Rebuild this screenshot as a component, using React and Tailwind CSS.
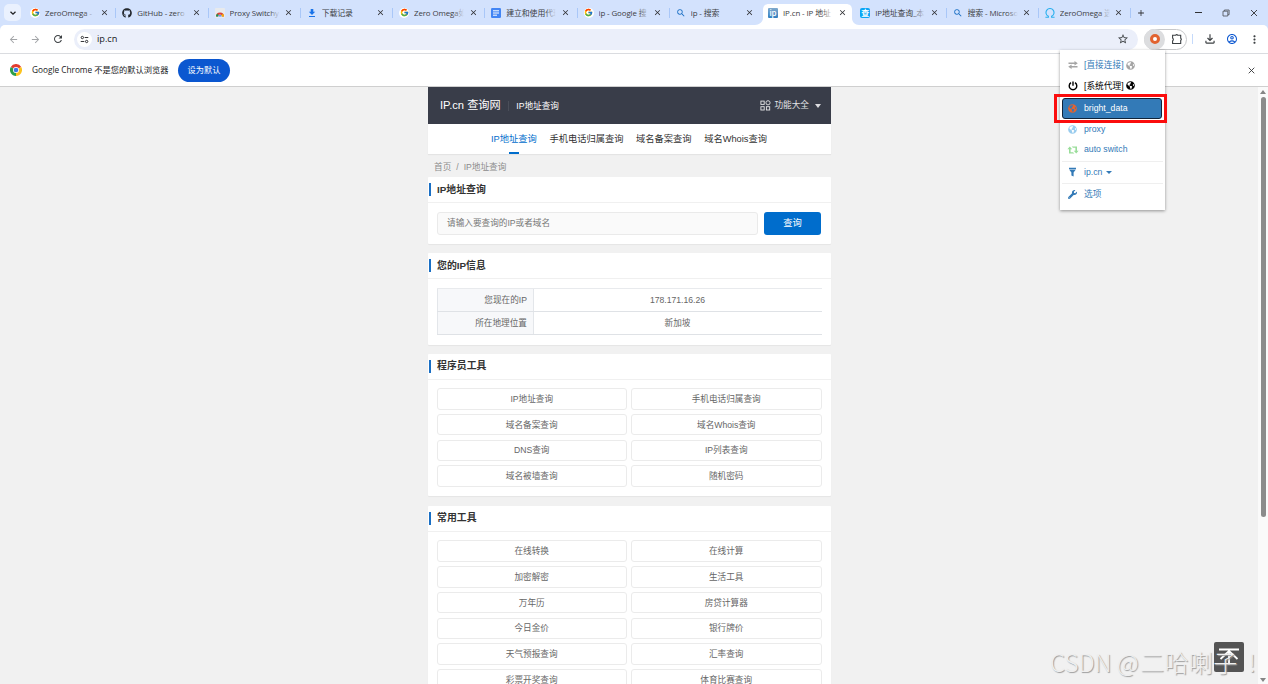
import { FaGithub, FaGlobeAmericas, FaWrench } from "react-icons/fa";
import { FcGoogle } from "react-icons/fc";
import {
  MdAdd,
  MdArrowBack,
  MdArrowForward,
  MdClose,
  MdMoreVert,
  MdOutlineAccountCircle,
  MdOutlineFileDownload,
  MdRefresh,
  MdSearch,
  MdStarBorder,
} from "react-icons/md";

const TABS = [
  { icon: "google", title: "ZeroOmega -" },
  { icon: "github", title: "GitHub - zero" },
  { icon: "store", title: "Proxy Switchy" },
  { icon: "download", title: "下载记录" },
  { icon: "google", title: "Zero Omega如" },
  { icon: "docs", title: "建立和使用代理" },
  { icon: "google", title: "ip - Google 搜" },
  { icon: "search", title: "ip - 搜索" },
  { icon: "ip", title: "IP.cn - IP 地址", active: true },
  { icon: "cha", title: "IP地址查询_本" },
  { icon: "search", title: "搜索 - Microso" },
  { icon: "omega", title: "ZeroOmega 选" },
];

const NAV = ["IP地址查询", "手机电话归属查询", "域名备案查询", "域名Whois查询"];

const DEV_TOOLS = [
  "IP地址查询",
  "手机电话归属查询",
  "域名备案查询",
  "域名Whois查询",
  "DNS查询",
  "IP列表查询",
  "域名被墙查询",
  "随机密码",
];

const COMMON_TOOLS = [
  "在线转换",
  "在线计算",
  "加密解密",
  "生活工具",
  "万年历",
  "房贷计算器",
  "今日金价",
  "银行牌价",
  "天气预报查询",
  "汇率查询",
  "彩票开奖查询",
  "体育比赛查询",
];

function ChromeLogo({ className }) {
  return (
    <svg viewBox="0 0 24 24" className={className}>
      <path d="M12 12 1.6 6A12 12 0 0 1 22.4 6Z" fill="#e33b2e" />
      <path d="M12 12V24A12 12 0 0 1 1.6 6Z" fill="#2a9d4a" />
      <path d="M12 12 22.4 6A12 12 0 0 1 12 24Z" fill="#fcc31e" />
      <circle cx="12" cy="12" r="6" fill="#fff" />
      <circle cx="12" cy="12" r="4.6" fill="#3b78e7" />
    </svg>
  );
}

function TabIcon({ name }) {
  switch (name) {
    case "google":
      return (
        <span className="flex size-[10px] items-center justify-center rounded-full bg-white">
          <FcGoogle className="size-[9px]" />
        </span>
      );
    case "github":
      return <FaGithub className="size-[10px] text-[#24292f]" />;
    case "store":
      return (
        <svg viewBox="0 0 10 10" className="size-[10px]">
          <rect width="10" height="10" rx="1" fill="#e8eaed" />
          <path d="M1 8.5a4 4 0 0 1 8 0H7a2 2 0 0 0-4 0Z" fill="#db4437" />
          <path d="M1 8.5A4 4 0 0 1 2.2 5.7L3.6 7.2 3 8.5Z" fill="#0f9d58" />
          <path d="M9 8.5A4 4 0 0 0 7.8 5.7L6.4 7.2 7 8.5Z" fill="#f4b400" />
          <path d="M3.4 8.5a1.6 1.6 0 0 1 3.2 0Z" fill="#4285f4" />
        </svg>
      );
    case "download":
      return (
        <svg viewBox="0 0 10 10" className="size-[10px]" fill="#1a73e8">
          <path d="M3.7 1h2.6v2.8h1.9L5 7 1.8 3.8h1.9ZM2 8h6v1.1H2Z" />
        </svg>
      );
    case "docs":
      return (
        <svg viewBox="0 0 10 10" className="size-[10px]">
          <rect width="10" height="10" rx="1.2" fill="#4285f4" />
          <path d="M2 2.8h6M2 5h6M2 7.2h4" stroke="#fff" strokeWidth="1" />
        </svg>
      );
    case "search":
      return <MdSearch className="size-[10px] text-[#1a6fc4]" />;
    case "ip":
      return (
        <span className="flex size-[10px] items-center justify-center rounded-[1px] bg-linear-to-b from-[#7fa9cc] to-[#2f7fc0] text-[8px] leading-none font-semibold text-white">
          ip
        </span>
      );
    case "cha":
      return (
        <span className="flex size-[10px] items-center justify-center rounded-[2px] bg-[#0aa5f5] text-[8px] leading-none font-bold text-white">
          查
        </span>
      );
    default:
      return (
        <svg viewBox="0 0 10 10" className="size-[10px]" fill="none" stroke="#2bb0ee" strokeWidth="1.1">
          <path d="M.4 9.3h3V8.2A4 4 0 1 1 6.6 8.2v1.1h3" />
        </svg>
      );
  }
}

function Tab({ tab, last }) {
  const fade = tab.active ? "to-white" : "to-[#d3e2fd]";
  return (
    <div className="relative flex h-full w-[92.25px] shrink-0 items-center pl-[6px]">
      {tab.active && (
        <svg viewBox="0 0 104 21" className="absolute -left-[7px] bottom-0 h-[21px] w-[104px]" fill="#fff">
          <path d="M0 21c4 0 8-3 8-7V6c0-4 2-6 6-6h77c4 0 6 2 6 6v8c0 4 3 7 7 7Z" />
        </svg>
      )}
      <div className="relative flex items-center">
        <TabIcon name={tab.icon} />
        <div className="relative ml-[5px] w-[50px] overflow-hidden text-[7.9px] leading-[12px] tracking-[-0.1px] whitespace-nowrap text-[#3c4043]">
          {tab.title}
          <span className={`absolute inset-y-0 right-0 w-[11px] bg-linear-to-r from-transparent ${fade}`} />
        </div>
        <MdClose className="ml-[4.5px] size-[9px] text-[#303134]" />
      </div>
      {!tab.active && !last && <span className="absolute right-0 h-[10px] w-px bg-[#a9c7f8]" />}
    </div>
  );
}

function TabStrip() {
  return (
    <div className="flex h-[25px] items-center bg-[#d3e2fd]">
      <div className="ml-[4px] flex size-[17px] items-center justify-center rounded-[5px] bg-[#eaf1fe]">
        <svg viewBox="0 0 8 8" className="size-[8px]" fill="none" stroke="#202124" strokeWidth="1.3">
          <path d="m1.5 2.8 2.5 2.4 2.5-2.4" />
        </svg>
      </div>
      <div className="ml-[3px] flex h-full">
        {TABS.map((tab, i) => (
          <Tab key={i} tab={tab} last={TABS[i + 1]?.active} />
        ))}
      </div>
      <MdAdd className="ml-[5px] size-[10px] text-[#303134]" />
      <div className="ml-auto flex items-center gap-[20px] pr-[10px]">
        <span className="h-px w-[7px] bg-[#303134]" />
        <svg viewBox="0 0 8 8" className="size-[8px]" fill="none" stroke="#4a4d52" strokeWidth=".8">
          <path d="M1 2.2h4.8V7H1ZM2.4 2V1h4.7v4.7H6" />
        </svg>
        <svg viewBox="0 0 8 8" className="size-[8px]" stroke="#303134" strokeWidth=".9">
          <path d="m1 1 6 6M7 1 1 7" />
        </svg>
      </div>
    </div>
  );
}

function Toolbar() {
  return (
    <div className="bg-[#d3e2fd]">
      <div className="flex h-[29px] items-center rounded-t-[5px] border-b border-[#dadce0] bg-white text-[#3c4043]">
        <MdArrowBack className="ml-[8px] size-[11px] text-[#a3a5a8]" />
        <MdArrowForward className="ml-[11px] size-[11px] text-[#a3a5a8]" />
        <MdRefresh className="ml-[11px] size-[12px]" />
        <div className="ml-[10px] flex h-[21px] w-[1064px] items-center rounded-full bg-[#ebeffa] pr-[9px] pl-[3px]">
          <span className="flex size-[15px] items-center justify-center rounded-full bg-white">
            <svg viewBox="0 0 10 10" className="size-[9px]" fill="none" stroke="#303134" strokeWidth="1.1">
              <circle cx="2.6" cy="2.8" r="1.3" />
              <path d="M5.2 2.8h4M.8 7.2h4" />
              <circle cx="7.4" cy="7.2" r="1.3" />
            </svg>
          </span>
          <span className="ml-[5px] text-[9.2px] leading-[14px] text-[#202124]">ip.cn</span>
          <MdStarBorder className="ml-auto size-[12px]" />
        </div>
        <div className="ml-[6px] flex h-[21px] w-[43px] items-center rounded-full border border-[#c7c8ca]">
          <span className="-ml-px flex size-[21px] items-center justify-center rounded-full bg-[#dcdddf]">
            <span className="size-[10px] rounded-full border-[3px] border-[#e2632f] bg-white" />
          </span>
          <svg viewBox="0 0 12 12" className="ml-[6px] size-[12px]" fill="none" stroke="#3c4043" strokeWidth="1.1">
            <path d="M1.6 2.3h2.9q1.2-1.3 2.4 0h2.8v3q1.3 1 0 2.2v3H1.6V7.8q1.5-1.4 0-2.8Z" />
          </svg>
        </div>
        <span className="ml-[5px] h-[10px] w-px bg-[#c5dafb]" />
        <MdOutlineFileDownload className="ml-[10px] size-[14px]" />
        <MdOutlineAccountCircle className="ml-[8.5px] size-[12px] text-[#0b57d0]" />
        <MdMoreVert className="ml-[10px] size-[13px]" />
      </div>
    </div>
  );
}

function InfoBar() {
  return (
    <div className="flex h-[33px] items-center border-b border-[#cfcfcf] bg-white">
      <ChromeLogo className="ml-[10px] size-[12px]" />
      <span className="ml-[10px] w-[146px] text-[8.25px] whitespace-nowrap text-[#202124]">
        Google Chrome 不是您的默认浏览器
      </span>
      <button className="h-[23px] w-[52px] rounded-full bg-[#0b57d0] text-[8.2px] text-white">
        设为默认
      </button>
      <svg viewBox="0 0 8 8" className="mr-[13px] ml-auto size-[7px]" stroke="#303134" strokeWidth="1">
        <path d="m.8.8 6.4 6.4M7.2.8.8 7.2" />
      </svg>
    </div>
  );
}

function Card({ title, className = "", children }) {
  return (
    <section className={`rounded-[1px] bg-white shadow-[0_1px_1px_rgba(0,0,0,0.05)] ${className}`}>
      <div className="flex h-[26px] items-center border-b border-[#f0f0f0] pl-px">
        <span className="h-[13px] w-[2px] bg-[#1a6fc4]" />
        <h2 className="ml-[6.5px] text-[9.9px] leading-[14px] font-bold text-[#333]">{title}</h2>
      </div>
      {children}
    </section>
  );
}

function ToolGrid({ items }) {
  return (
    <div className="grid grid-cols-2 gap-x-[4px] gap-y-[4.3px] px-[9px] pt-[8.5px] pb-[9px]">
      {items.map((item) => (
        <a
          key={item}
          className="flex h-[21.5px] items-center justify-center rounded-[3px] border border-[#ebebeb] pt-px text-[8.65px] text-[#666]"
        >
          {item}
        </a>
      ))}
    </div>
  );
}

function IpRow({ label, value }) {
  return (
    <div className="flex h-[23.2px] border-b border-[#dfe2e6]">
      <div className="flex w-[97px] items-center justify-end border-x border-[#e3e6ea] bg-[#f7f8fa] pr-[5.5px]">
        {label}
      </div>
      <div className="flex flex-1 items-center justify-center">{value}</div>
    </div>
  );
}

function Site() {
  return (
    <main className="mx-auto w-[403px] font-['Liberation_Sans','Noto_Sans_CJK_SC',sans-serif]">
      <header className="flex h-[37px] items-center bg-[#393d49] pr-[9.5px] pl-[12.5px] text-white">
        <span className="text-[11.2px]">IP.cn 查询网</span>
        <span className="ml-[7.5px] h-[10px] w-px bg-[#4a4e59]" />
        <span className="ml-[7px] pt-px text-[8.65px]">IP地址查询</span>
        <svg viewBox="0 0 11 11" className="ml-auto size-[11px]" fill="none" stroke="#e8e8e8" strokeWidth=".9">
          <rect x=".9" y="1.1" width="3.3" height="3.3" />
          <circle cx="8" cy="2.8" r="2.1" />
          <rect x=".9" y="6.7" width="3.3" height="3.3" />
          <rect x="6.4" y="6.7" width="3.3" height="3.3" />
        </svg>
        <span className="ml-[3px] text-[8.65px] text-[#e4e4e6]">功能大全</span>
        <span className="ml-[6px] border-x-[3.5px] border-t-[4px] border-x-transparent border-t-[#dddde0]" />
      </header>

      <nav className="flex h-[30px] justify-center gap-[12.5px] bg-white text-[9.28px] text-[#333] shadow-[0_1px_1px_rgba(0,0,0,0.05)]">
        {NAV.map((item, i) => (
          <a
            key={item}
            className={i === 0 ? "flex flex-col items-center text-[#006dcc]" : "flex flex-col items-center"}
          >
            <span className="flex flex-1 items-center pt-[3px]">{item}</span>
            <span className={i === 0 ? "h-[2px] w-[10px] bg-[#006dcc]" : "h-[2px]"} />
          </a>
        ))}
      </nav>

      <div className="flex h-[23px] items-center gap-[5px] pt-[3px] pl-[6.5px] text-[8.65px] text-[#8c8c8c]">
        <span>首页</span>
        <span>/</span>
        <span>IP地址查询</span>
      </div>

      <Card title="IP地址查询" className="h-[67px]">
        <div className="flex gap-[6px] px-[9.5px] pt-[9px]">
          <div className="flex h-[23px] flex-1 items-center rounded-[3px] border border-[#eaeaea] bg-[#fafafa] pl-[9px] text-[8.65px] text-[#777]">
            请输入要查询的IP或者域名
          </div>
          <button className="h-[22.5px] w-[57px] rounded-[3px] bg-[#006dcc] pt-[2px] text-[9.3px] text-white">
            查询
          </button>
        </div>
      </Card>

      <Card title="您的IP信息" className="mt-[9px] h-[92px]">
        <div className="mx-[9px] mt-[9px] border-t border-[#e8eaed] text-[8.65px] text-[#666]">
          <IpRow label="您现在的IP" value="178.171.16.26" />
          <IpRow label="所在地理位置" value="新加坡" />
        </div>
      </Card>

      <Card title="程序员工具" className="mt-[8.5px] h-[142.5px]">
        <ToolGrid items={DEV_TOOLS} />
      </Card>

      <Card title="常用工具" className="mt-[9.8px]">
        <ToolGrid items={COMMON_TOOLS} />
      </Card>
    </main>
  );
}

function Scrollbar() {
  return (
    <div className="flex w-[10px] flex-col items-center bg-[#fafafa] pt-[3px] pb-[2px]">
      <span className="border-x-[3px] border-b-[4px] border-x-transparent border-b-[#858585]" />
      <span className="mt-[3px] h-[420px] w-[5px] rounded-full bg-[#8b8b8b]" />
      <span className="mt-auto border-x-[3px] border-t-[4px] border-x-transparent border-t-[#858585]" />
    </div>
  );
}

/* Extension popup, hangs below the toolbar button */
function ProxyMenu() {
  return (
    <div className="absolute top-[50px] left-[1060px] h-[160px] w-[105px] bg-white px-[2px] pt-[5px] font-['Liberation_Sans','Noto_Sans_CJK_SC',sans-serif] text-[8.7px] text-[#337ab7] shadow-[0_1px_3px_rgba(0,0,0,0.4)]">
      <div className="flex h-[20.5px] items-center pl-[6px]">
        <svg viewBox="0 0 10 8" className="mb-px h-[8px] w-[10px]" fill="#a5a5a5">
          <path d="M.5 1.5h6V0L9.8 2.3 6.5 4.5V3.1h-6ZM9.5 4.9H3.6V3.5L.2 5.7l3.4 2.3V6.5h5.9Z" />
        </svg>
        <span className="ml-[6px] pt-px">[直接连接]</span>
        <FaGlobeAmericas className="ml-[2px] size-[9px] text-[#a5a5a5]" />
      </div>
      <div className="flex h-[20.5px] items-center pl-[6px] text-black">
        <svg viewBox="0 0 10 10" className="size-[10px]" fill="none" stroke="#000" strokeWidth="1.4">
          <path d="M3 1.7a3.8 3.8 0 1 0 4 0M5 .6v4.2" />
        </svg>
        <span className="ml-[6px] pt-px">[系统代理]</span>
        <FaGlobeAmericas className="ml-[2px] size-[9px]" />
      </div>
      <div className="mt-[2px] mr-px flex h-[21px] items-center rounded-[3px] border border-[#10243a] bg-[#337ab7] pl-[5px] text-white">
        <FaGlobeAmericas className="size-[9px] text-[#e2632f]" />
        <span className="ml-[7px]">bright_data</span>
      </div>
      <div className="flex h-[20.5px] items-center pl-[6px]">
        <FaGlobeAmericas className="size-[9px] text-[#99ccee]" />
        <span className="ml-[7px]">proxy</span>
      </div>
      <div className="flex h-[20.5px] items-center pl-[5px]">
        <svg viewBox="0 0 12 8" className="h-[8px] w-[12px]" fill="#99dd99">
          <path d="M2.8.4 5.2 3.2H3.6v3H6l1.3 1.4H2V3.2H.4ZM9.2 7.6 6.8 4.8h1.6v-3H6L4.7.4H10v4.4h1.6Z" />
        </svg>
        <span className="ml-[5px]">auto switch</span>
      </div>
      <div className="mt-px flex h-[23px] items-center border-y border-[#efefef] pl-[6px]">
        <svg viewBox="0 0 9 10" className="mb-[2px] h-[10px] w-[9px]" fill="#337ab7">
          <path d="M1 .8h7v1.4H1ZM1.3 2.8h6.4L5.6 5.6v3.8l-2.2-.9V5.6Z" />
        </svg>
        <span className="ml-[7px] pt-px">ip.cn</span>
        <span className="ml-[4px] border-x-[3px] border-t-[3px] border-x-transparent border-t-[#337ab7]" />
      </div>
      <div className="flex h-[21px] items-center pl-[6px]">
        <FaWrench className="mb-px size-[9px]" />
        <span className="ml-[7px] pt-px">选项</span>
      </div>
    </div>
  );
}

export default function App() {
  return (
    <div className="relative flex h-[684px] w-[1268px] flex-col overflow-hidden bg-[#f1f1f1] font-['Open_Sans','Noto_Sans_CJK_SC',sans-serif]">
      <TabStrip />
      <Toolbar />
      <InfoBar />
      <div className="flex min-h-0 flex-1">
        <div className="min-w-0 flex-1 overflow-hidden">
          <Site />
        </div>
        <Scrollbar />
      </div>

      <ProxyMenu />
      {/* highlight frame around the selected profile */}
      <div className="absolute top-[94px] left-[1054px] h-[29px] w-[113px] border-[3px] border-[#fb0d0d]" />

      {/* back to top */}
      <div className="absolute top-[642px] left-[1213.5px] flex size-[30px] justify-center rounded-[2px] bg-[#545454] pt-[5px]">
        <svg viewBox="0 0 20 20" className="size-[20px]" fill="none" stroke="#fff" strokeWidth="1.8">
          <path d="M0 2.5h20M1.5 12 10 4l8.5 8M10 5v13" />
        </svg>
      </div>
      <div className="absolute top-[643.5px] left-[1050px] flex font-['Noto_Sans_CJK_SC',sans-serif] text-[24px] leading-[36px] font-light whitespace-nowrap text-[#efefef] [text-shadow:1px_1px_1px_#9a9a9a]">
        <span className="w-[90px]">CSDN @</span>
        <span className="tracking-[0.4px]">二哈喇子</span>
        <span className="ml-[11px] w-[10px]">!</span>
      </div>
    </div>
  );
}
